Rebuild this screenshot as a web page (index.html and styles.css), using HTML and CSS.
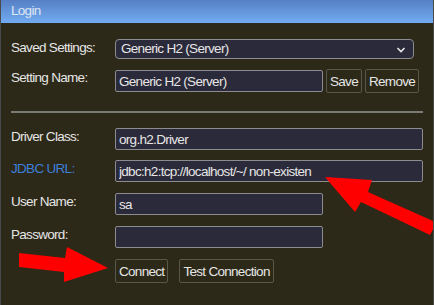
FILE: index.html
```html
<!DOCTYPE html>
<html lang="en">
<head>
    <meta charset="UTF-8">
    <meta name="viewport" content="width=device-width, initial-scale=1.0">
    <title>Login</title>
    <link rel="stylesheet" href="styles.css">
</head>
<body>
<div class="window">
    <div class="window__title">Login</div>

    <form class="login">
        <!-- Saved settings -->
        <div class="row row--first">
            <label class="label">Saved Settings:</label>
            <div class="select">
                <span class="select__text">Generic H2 (Server)</span>
                <svg class="select__arrow" width="10" height="6" viewBox="0 0 10 6">
                    <path d="M1.5 1 L5 4.5 L8.5 1" fill="none" stroke="#e8e8e8" stroke-width="1.6"/>
                </svg>
            </div>
        </div>
        <div class="row">
            <label class="label">Setting Name:</label>
            <input type="text" class="input input--short" value="Generic H2 (Server)"/>
            <button class="btn btn--small" type="button">Save</button>
            <button class="btn btn--small" type="button">Remove</button>
        </div>

        <hr class="divider">

        <!-- Connection -->
        <div class="row row--after-divider">
            <label class="label">Driver Class:</label>
            <input type="text" class="input input--long" value="org.h2.Driver"/>
        </div>
        <div class="row">
            <label class="label label--link">JDBC URL:</label>
            <input type="text" class="input input--long" value="jdbc:h2:tcp://localhost/~/ non-existen"/>
        </div>
        <div class="row row--loose">
            <label class="label">User Name:</label>
            <input type="text" class="input input--short" value="sa"/>
        </div>
        <div class="row row--loose">
            <label class="label">Password:</label>
            <input type="password" class="input input--short" value=""/>
        </div>
        <div class="row row--loose">
            <span class="label"></span>
            <button class="btn" type="submit">Connect</button>
            <button class="btn btn--gap" type="button">Test Connection</button>
        </div>
    </form>

    <!-- red annotation arrows -->
    <svg class="arrows" width="434" height="305" viewBox="0 0 434 305">
        <polygon fill="#ff0000" points="324,177 371,180 367,192 434,222 434,226 429,235 360,202 354,212"/>
        <polygon fill="#ff0000" points="18,253 64,258 66,247 107,268 63,282 63,272 18,267"/>
    </svg>
</div>
</body>
</html>
```

FILE: styles.css
```css
:root {
    /* COLORS */
    --bg: #2c2918;
    --field: #2b2a3a;
    --field-border: #8c8c90;
    --btn-border: #58574c;
    --text: #e6e6e6;
    --blue: #3d7fdc;

    font-family: "Liberation Sans", Arial, sans-serif;
    font-size: 13.5px;
    letter-spacing: -0.7px;
}

body {
    margin: 0;
    background-color: var(--bg);
}

.window {
    position: relative;
    height: 305px;
    border-left: 1px solid #4a4a4a;
    border-right: 1px solid #4a4a4a;
    box-sizing: border-box;
    overflow: hidden;
}

.window__title {
    height: 23px;
    line-height: 22px;
    padding-left: 10px;
    color: #dfe6f4;
    background-image: linear-gradient(180deg, #5780c4 0%, #72abf2 100%);
}

.login {
    margin: 0;
    padding: 16px 10px 0 10px;
}

.row {
    display: flex;
    align-items: center;
    margin-top: 10px;
}

.row--first {
    margin-top: 0;
}

.row--after-divider {
    margin-top: 15px;
}

.row--loose {
    margin-top: 11px;
}

.label {
    align-self: flex-start;
    flex: 0 0 104px;
    line-height: 16px;
    padding-top: 1px;
    color: var(--text);
}

.label--link {
    color: var(--blue);
}

.select {
    position: relative;
    width: 299px;
    height: 20px;
    box-sizing: border-box;
    border: 1px solid var(--field-border);
    border-radius: 4px;
    background-color: var(--field);
    color: var(--text);
    line-height: 18px;
    padding-left: 5px;
}

.select__arrow {
    position: absolute;
    right: 7px;
    top: 7px;
}

.input {
    height: 22px;
    box-sizing: border-box;
    margin: 0;
    padding: 0 3px;
    border: 1px solid var(--field-border);
    border-radius: 2px;
    background-color: var(--field);
    color: var(--text);
    font: inherit;
    letter-spacing: inherit;
    outline: none;
}

.input--short {
    width: 208px;
}

.input--long {
    width: 308px;
}

.btn {
    height: 24px;
    box-sizing: border-box;
    margin: 0;
    padding: 0 3px;
    border: 1px solid var(--btn-border);
    border-radius: 2px;
    background-color: transparent;
    color: var(--text);
    font: inherit;
    letter-spacing: inherit;
    cursor: pointer;
}

.btn--small {
    margin-left: 3px;
}

.btn--gap {
    margin-left: 11px;
}

.divider {
    margin: 18px 0 0 0;
    border: none;
    border-top: 2px solid #7a7a76;
    height: 0;
}

.arrows {
    position: absolute;
    top: 0;
    left: 0;
    pointer-events: none;
}
```
